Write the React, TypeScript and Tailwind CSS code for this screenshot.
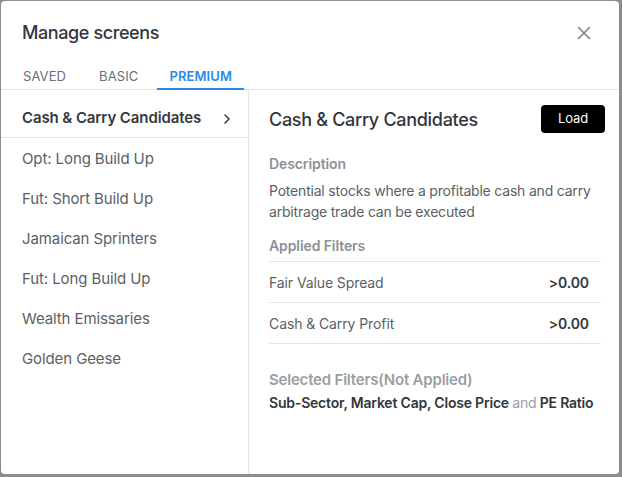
import React from "react";

const screens = [
  "Opt: Long Build Up",
  "Fut: Short Build Up",
  "Jamaican Sprinters",
  "Fut: Long Build Up",
  "Wealth Emissaries",
  "Golden Geese",
];

export default function App() {
  return (
    <div
      className="w-[622px] h-[477px] bg-[#8c8c8c] p-[1px] pr-[3px] pb-[3px]"
      style={{ fontFamily: "Inter, 'Noto Sans', sans-serif" }}
    >
      <div className="w-full h-full bg-white rounded-[4px] flex flex-col overflow-hidden">
        {/* header */}
        <div className="flex items-center justify-between pl-[21px] pr-[28px] pt-[18px] h-[45px]">
          <h1 className="text-[18px] leading-[28px] font-medium text-[#30363c] tracking-[-0.4px]">Manage screens</h1>
          <svg width="14" height="14" viewBox="0 0 14 14" className="text-[#7b8087]">
            <path d="M1.5 1.5L12.5 12.5M12.5 1.5L1.5 12.5" stroke="currentColor" strokeWidth="1.6" strokeLinecap="round" />
          </svg>
        </div>
        {/* tabs */}
        <div className="flex items-end h-[44px] border-b border-[#e4e4e4] pl-[10px] text-[13px] leading-[20px] tracking-[0.1px]">
          <div className="px-[12px] pb-[3px] text-[#6b7077]">SAVED</div>
          <div className="px-[12px] pb-[3px] ml-[9px] text-[#6b7077]">BASIC</div>
          <div className="px-[12px] pb-[2px] ml-[7px] text-[#2a8be6] font-semibold border-b-2 border-[#2a8be6] -mb-[1px]">PREMIUM</div>
        </div>
        {/* body */}
        <div className="flex flex-1 min-h-0">
          <div className="w-[248px] border-r border-[#e4e4e4] pt-[10px]">
            <div className="h-[38px] flex items-center justify-between pl-[21px] pr-[16px] border-b border-[#e4e4e4]">
              <span className="text-[15px] font-semibold text-[#33393f] tracking-[-0.1px]">Cash &amp; Carry Candidates</span>
              <svg width="10" height="12" viewBox="0 0 10 12" className="text-[#33393f]">
                <path d="M3 2L7 6L3 10" stroke="currentColor" strokeWidth="1.5" fill="none" strokeLinecap="round" strokeLinejoin="round" />
              </svg>
            </div>
            <div className="pt-[1px]">
              {screens.map((s) => (
                <div key={s} className="h-[40px] flex items-center pl-[21px] text-[15px] text-[#5a5f66] tracking-[-0.1px]">
                  {s}
                </div>
              ))}
            </div>
          </div>
          <div className="flex-1 pl-[20px] pr-[14px] pt-[15px] tracking-[-0.1px]">
            <div className="flex items-center justify-between">
              <h2 className="text-[18px] font-medium text-[#30363c] tracking-[-0.3px]">Cash &amp; Carry Candidates</h2>
              <button className="w-[64px] h-[28px] bg-black text-white text-[13px] rounded-[4px] flex items-center justify-center">
                Load
              </button>
            </div>
            <div className="mt-[20px] text-[14px] font-semibold text-[#8c9197]">Description</div>
            <p className="mt-[6px] text-[14px] leading-[21px] text-[#5a5f66] tracking-[-0.2px]">
              Potential stocks where a profitable cash and carry arbitrage trade can be executed
            </p>
            <div className="mt-[13px] text-[14px] font-semibold text-[#8c9197]">Applied Filters</div>
            <div className="mt-[5px] mr-[4px] border-t border-[#e4e4e4]">
              <div className="h-[41px] flex items-center justify-between pr-[12px] border-b border-[#e4e4e4] text-[14px]">
                <span className="text-[#5a5f66]">Fair Value Spread</span>
                <span className="font-semibold text-[#30363c]">&gt;0.00</span>
              </div>
              <div className="h-[41px] flex items-center justify-between pr-[12px] border-b border-[#e4e4e4] text-[14px]">
                <span className="text-[#5a5f66]">Cash &amp; Carry Profit</span>
                <span className="font-semibold text-[#30363c]">&gt;0.00</span>
              </div>
            </div>
            <div className="mt-[25px] text-[15px] font-semibold text-[#9a9ea4] tracking-[-0.2px]">Selected Filters(Not Applied)</div>
            <div className="mt-[0px] text-[14px] font-semibold text-[#30363c] tracking-[-0.2px]">
              Sub-Sector, Market Cap, Close Price <span className="font-normal text-[#9a9ea4]">and</span> PE Ratio
            </div>
          </div>
        </div>
      </div>
    </div>
  );
}
